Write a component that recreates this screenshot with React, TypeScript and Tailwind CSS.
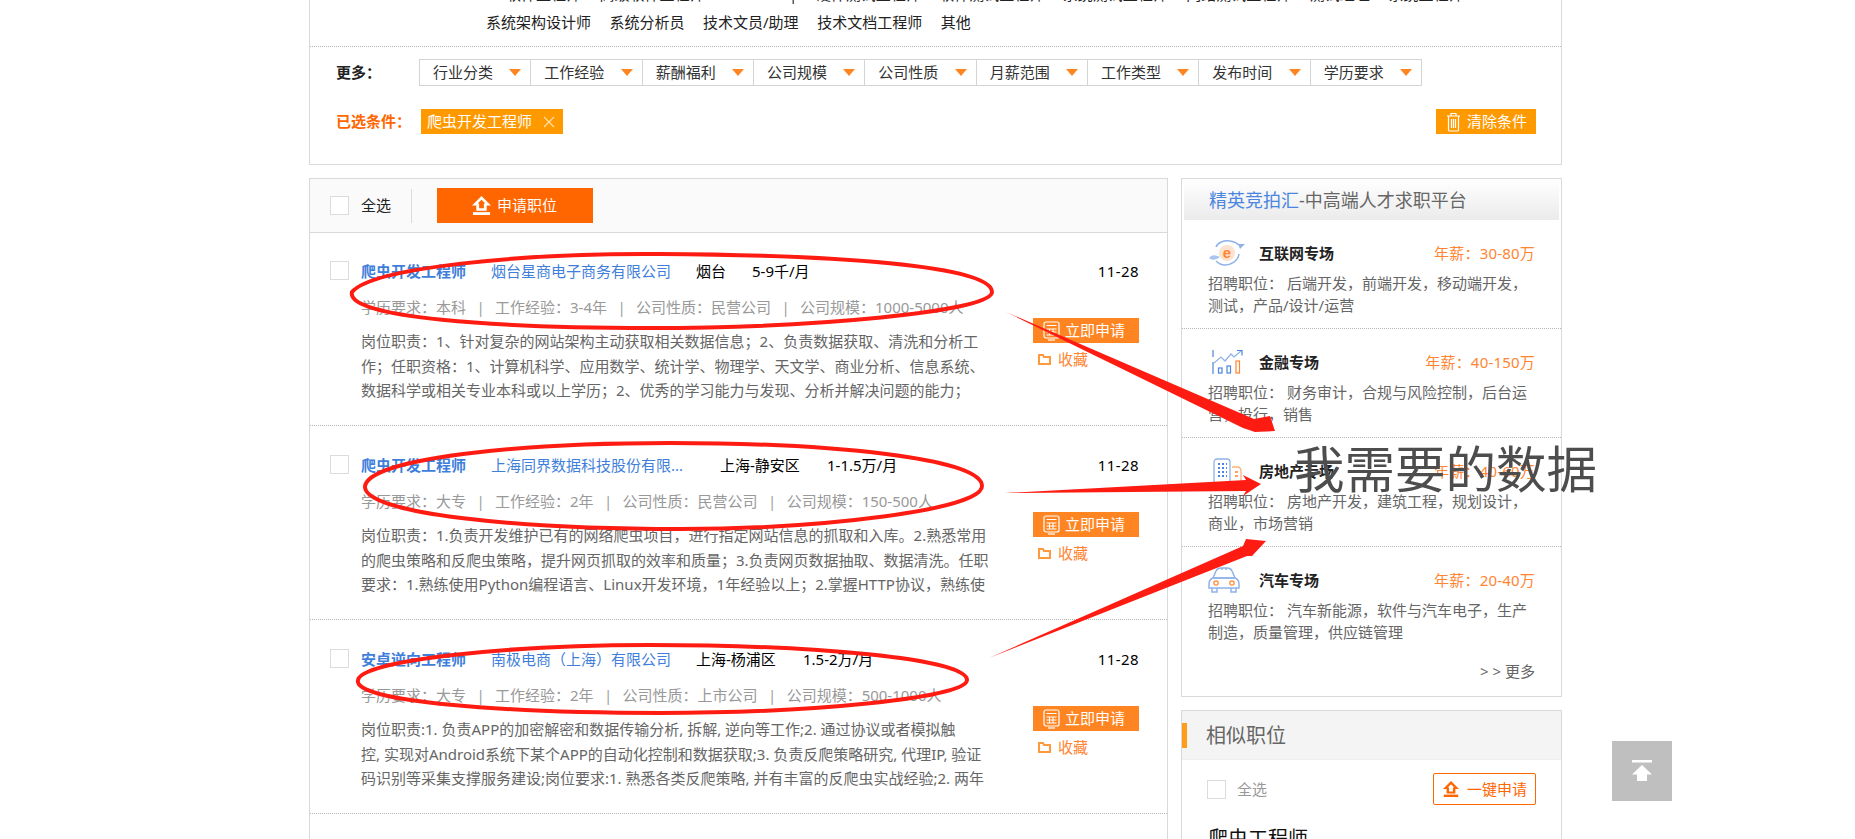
const filters = ['行业分类', '工作经验', '薪酬福利', '公司规模', '公司性质', '月薪范围', '工作类型', '发布时间', '学历要求']

const jobs = [
  {
    title: '爬虫开发工程师',
    company: '烟台星商电子商务有限公司',
    companyWidth: 'w-[205px]',
    city: '烟台',
    cityWidth: 'w-[56px]',
    salary: '5-9千/月',
    meta: ['学历要求：本科', '工作经验：3-4年', '公司性质：民营公司', '公司规模：1000-5000人'],
    desc: [
      '岗位职责：1、针对复杂的网站架构主动获取相关数据信息；2、负责数据获取、清洗和分析工',
      '作；任职资格：1、计算机科学、应用数学、统计学、物理学、天文学、商业分析、信息系统、',
      '数据科学或相关专业本科或以上学历；2、优秀的学习能力与发现、分析并解决问题的能力；',
    ],
  },
  {
    title: '爬虫开发工程师',
    company: '上海同界数据科技股份有限...',
    companyWidth: 'w-[229px]',
    city: '上海-静安区',
    cityWidth: 'w-[107px]',
    salary: '1-1.5万/月',
    meta: ['学历要求：大专', '工作经验：2年', '公司性质：民营公司', '公司规模：150-500人'],
    desc: [
      '岗位职责：1.负责开发维护已有的网络爬虫项目，进行指定网站信息的抓取和入库。2.熟悉常用',
      '的爬虫策略和反爬虫策略，提升网页抓取的效率和质量；3.负责网页数据抽取、数据清洗。任职',
      '要求：1.熟练使用Python编程语言、Linux开发环境，1年经验以上；2.掌握HTTP协议，熟练使',
    ],
  },
  {
    title: '安卓逆向工程师',
    company: '南极电商（上海）有限公司',
    companyWidth: 'w-[205px]',
    city: '上海-杨浦区',
    cityWidth: 'w-[107px]',
    salary: '1.5-2万/月',
    meta: ['学历要求：大专', '工作经验：2年', '公司性质：上市公司', '公司规模：500-1000人'],
    desc: [
      '岗位职责:1. 负责APP的加密解密和数据传输分析, 拆解, 逆向等工作;2. 通过协议或者模拟触',
      '控, 实现对Android系统下某个APP的自动化控制和数据获取;3. 负责反爬策略研究, 代理IP, 验证',
      '码识别等采集支撑服务建设;岗位要求:1. 熟悉各类反爬策略, 并有丰富的反爬虫实战经验;2. 两年',
    ],
  },
]

const zones = [
  { name: '互联网专场', pay: '年薪：30-80万', lines: ['招聘职位： 后端开发，前端开发，移动端开发，', '测试，产品/设计/运营'], icon: <GlobeIcon /> },
  { name: '金融专场', pay: '年薪：40-150万', lines: ['招聘职位： 财务审计，合规与风险控制，后台运', '营，投行，销售'], icon: <ChartIcon /> },
  { name: '房地产专场', pay: '年薪：40-60万', lines: ['招聘职位： 房地产开发，建筑工程，规划设计，', '商业，市场营销'], icon: <BuildingIcon /> },
  { name: '汽车专场', pay: '年薪：20-40万', lines: ['招聘职位： 汽车新能源，软件与汽车电子，生产', '制造，质量管理，供应链管理'], icon: <CarIcon /> },
]

function UploadIcon({ className }: { className: string }) {
  return (
    <svg className={className} viewBox="0 0 20 20" fill="currentColor">
      <path fillRule="evenodd" d="M10 0 L20 10 L15.5 10 L15.5 15.5 L4.5 15.5 L4.5 10 L0 10 Z M10 4 L6 8 L7.5 8 L7.5 13 L12.5 13 L12.5 8 L14 8 Z" />
      <rect x="1" y="17" width="18" height="3" />
    </svg>
  )
}

function CalcIcon() {
  return (
    <svg className="h-[20px] w-[17px] shrink-0" viewBox="0 0 17 20" fill="none" stroke="#fff" strokeWidth="1.2">
      <rect x="1" y="1" width="15" height="16" rx="2" />
      <path d="M3.5 4.5h10M3.5 8h10M3.5 11h10M3.5 14h10M6.5 8v6M10 8v6" strokeWidth="1" />
      <path d="M5 19h7" />
    </svg>
  )
}

function GlobeIcon() {
  return (
    <svg className="h-[26px] w-[38px]" viewBox="0 0 38 26" fill="none">
      <path d="M8 7 C10 2 17 0 22 1 C26 1.5 29 3 31 5" stroke="#8fb2e8" strokeWidth="1.5" />
      <path d="M37 4 L30 4 L32 9 Z" fill="#8fb2e8" />
      <path d="M31 14 C30 21 23 25 17 25 C13 25 10 23 8 21" stroke="#8fb2e8" strokeWidth="1.5" />
      <path d="M1 18 C4 14 7 15 12 17 C8 20 4 21 1 18 Z" fill="#a9c4ee" />
      <circle cx="19" cy="13" r="8" fill="#fbe3cf" />
      <text x="19" y="18" textAnchor="middle" fontSize="15" fontWeight="700" fill="#ff8533" fontFamily="Liberation Sans, sans-serif">e</text>
    </svg>
  )
}

function ChartIcon() {
  return (
    <svg className="ml-[4px] h-[26px] w-[32px]" viewBox="0 0 32 26" fill="none" strokeWidth="1.2">
      <path d="M1 1v7M1 13v12" stroke="#4a86e0" />
      <path d="M2 14 L9 8 L13 12 L19 5 L22 8 L29 2" stroke="#8fb2e8" />
      <path d="M25 1.5h5v5" stroke="#4a86e0" />
      <rect x="6.5" y="19" width="3.5" height="5" stroke="#4a86e0" />
      <rect x="15" y="17" width="3.5" height="7" stroke="#4a86e0" />
      <rect x="24" y="12" width="3.5" height="12" stroke="#ff8533" />
    </svg>
  )
}

function BuildingIcon() {
  return (
    <svg className="ml-[5px] h-[26px] w-[30px]" viewBox="0 0 30 26" fill="none">
      <rect x="1" y="1" width="16" height="26" rx="3" stroke="#8fb2e8" strokeWidth="1.3" />
      <path d="M5 6h2M9 6h2M13 6h1M5 10h2M9 10h2M13 10h1M5 14h2M9 14h2M13 14h1M5 18h2M9 18h2M13 18h1" stroke="#4a86e0" strokeWidth="2" />
      <path d="M19 9h5c2 0 4 1 4 4v13H19" stroke="#ffb27a" strokeWidth="1.3" />
      <path d="M22 14h3M22 18h3" stroke="#ff8533" strokeWidth="1.3" />
    </svg>
  )
}

function CarIcon() {
  return (
    <svg className="h-[26px] w-[32px]" viewBox="0 0 32 26" fill="none" stroke="#8fb2e8" strokeWidth="1.5">
      <path d="M5 11 L8 4 C9 1.5 11 1 13 1 H19 C21 1 23 1.5 24 4 L27 11" />
      <path d="M5 11 C2.5 12 1 14 1 17 V21 H31 V17 C31 14 29.5 12 27 11 Z" />
      <path d="M4 21v4h5v-4M23 21v4h5v-4M14 1v2M18 1v2M5 11h22" />
      <circle cx="8" cy="16" r="2.2" stroke="#ff8533" strokeWidth="1.2" />
      <circle cx="24" cy="16" r="2.2" stroke="#ff8533" strokeWidth="1.2" />
    </svg>
  )
}

function Checkbox({ className }: { className: string }) {
  return <span className={`block h-[19px] w-[19px] shrink-0 border border-[#dcdcdc] bg-white ${className}`} />
}

function Job({ job }: { job: (typeof jobs)[number] }) {
  return (
    <div className="h-[194px] border-b border-dotted border-[#b5b5b5] pl-[20px] pr-[28px] pt-[27px] first:h-[193px] first:pt-[26px]">
      <div className="flex h-[24px] items-start text-[15px] leading-[24px]">
        <Checkbox className="mt-[2px] mr-[12px]" />
        <span className="w-[130px] font-bold text-[#3f7fdb]">{job.title}</span>
        <span className={`${job.companyWidth} text-[#3f7fdb]`}>{job.company}</span>
        <span className={`${job.cityWidth} text-black`}>{job.city}</span>
        <span className="text-black">{job.salary}</span>
        <span className="ml-auto tracking-[0.4px] text-black">11-28</span>
      </div>
      <div className="mt-[12px] flex pl-[31px]">
        <div className="w-[672px] text-[15px]">
          <div className="h-[24px] whitespace-nowrap leading-[24px] text-[#999]">
            {job.meta.map((m, i) => (
              <span key={m}>
                {i > 0 && <span className="inline-block w-[29px] text-center text-[#a0a0a0]">|</span>}
                {m}
              </span>
            ))}
          </div>
          <div className="mt-[10px] text-[#666] leading-[24.5px]">
            {job.desc.map((line) => (
              <div key={line} className="whitespace-nowrap">{line}</div>
            ))}
          </div>
        </div>
        <div className="mt-[23px] w-[106px]">
          <button className="flex h-[25px] w-[106px] items-center bg-[#ff8522] pl-[10px] text-[15px] text-white">
            <CalcIcon />
            <span className="ml-[5px]">立即申请</span>
          </button>
          <div className="mt-[4px] flex h-[24px] items-center pl-[5px] text-[15px] text-[#ff8533]">
            <svg className="h-[12px] w-[13px]" viewBox="0 0 13 12" fill="none" stroke="#ff9a3c" strokeWidth="2">
              <path d="M1 2h4l1 2h6v7H1z" />
            </svg>
            <span className="ml-[7px]">收藏</span>
          </div>
        </div>
      </div>
    </div>
  )
}

function Annotations() {
  const red = '#fe1c12'
  return (
    <svg className="pointer-events-none absolute left-0 top-0 h-[839px] w-[1855px]" viewBox="0 0 1855 839" fill="none">
      <path d="M352 292 C372 268 520 253 660 254 C830 255 992 265 992 292 C992 312 810 328 650 328 C500 328 345 318 352 292 Z" stroke={red} strokeWidth="4" />
      <path d="M365 486 C370 458 520 443 670 443 C830 443 982 458 982 486 C982 510 820 529 680 529 C520 529 362 514 365 486 Z" stroke={red} strokeWidth="4" />
      <path d="M358 680 C362 660 510 645 650 645 C810 645 967 658 967 680 C967 698 810 713 660 713 C510 713 352 702 358 680 Z" stroke={red} strokeWidth="4" />
      <polygon points="1006,312 1254,419 1270,416 1275,431 1255,432 1243,428" fill={red} />
      <polygon points="1005,493 1246,480 1243,475 1261,484 1243,496 1246,491" fill={red} />
      <polygon points="989,658 1243,546 1246,539 1266,541 1252,556 1247,556" fill={red} />
    </svg>
  )
}

export default function App() {
  return (
    <div className="relative h-[839px] w-[1855px] overflow-hidden bg-white pl-[309px] [font-family:'Noto_Sans','Noto_Sans_CJK_SC',sans-serif]">
      <div className="w-[1253px]">
        {/* filter panel */}
        <div className="h-[165px] border-x border-b border-[#d9d9d9]">
          <div className="flow-root h-[47px] border-b border-dotted border-[#b5b5b5] text-[15px] leading-[24px] text-[#222]">
            <div className="ml-[196px] -mt-[18px] flex h-[24px] gap-[18.5px] whitespace-nowrap">
              <span>软件工程师</span><span>高级软件工程师</span><span className="ml-[66px]">|</span><span>硬件测试工程师</span><span>软件测试工程师</span><span>系统测试工程师</span><span>网络测试工程师</span><span>测试经理</span><span>系统工程师</span>
            </div>
            <div className="ml-[176px] mt-[4px] flex h-[24px] gap-[18.5px] whitespace-nowrap">
              <span>系统架构设计师</span><span>系统分析员</span><span>技术文员/助理</span><span>技术文档工程师</span><span>其他</span>
            </div>
          </div>
          <div className="mt-[12px] flex pl-[26px] text-[15px]">
            <span className="w-[83px] font-bold leading-[27px] text-[#222]">更多：</span>
            <div className="flex h-[27px] w-[1003px] border border-[#d4d4d4]">
              {filters.map((f) => (
                <div key={f} className="flex flex-1 items-center justify-between border-r border-[#d4d4d4] pl-[13px] pr-[9px] leading-[25px] text-[#333] last:border-r-0">
                  {f}
                  <span className="h-0 w-0 border-x-[6px] border-t-[7px] border-x-transparent border-t-[#ff8522]" />
                </div>
              ))}
            </div>
          </div>
          <div className="mt-[23px] flex items-center pl-[26px] pr-[25px] text-[15px]">
            <span className="w-[85px] font-bold text-[#ff6600]">已选条件：</span>
            <div className="flex h-[25px] w-[142px] items-center justify-between bg-[#ff9900] pl-[6px] pr-[8px] text-white">
              爬虫开发工程师
              <svg className="h-[12px] w-[12px]" viewBox="0 0 12 12" stroke="#ffe2b0" strokeWidth="1.1"><path d="M1 1l10 10M11 1L1 11" /></svg>
            </div>
            <button className="ml-auto flex h-[25px] w-[100px] items-center bg-[#ff9900] pl-[10px] text-white">
              <svg className="h-[20px] w-[15px] shrink-0" viewBox="0 0 15 20" fill="none" stroke="#fff" strokeWidth="1.2">
                <path d="M1 4h13M5 4V1.5h5V4M2.5 4v14c0 .6.5 1 1 1h8c.5 0 1-.4 1-1V4M5.5 7v9M7.5 7v9M9.5 7v9" />
              </svg>
              <span className="ml-[6px]">清除条件</span>
            </button>
          </div>
        </div>

        <div className="mt-[13px] flex gap-[13px]">
          {/* job list */}
          <div className="w-[859px] border-x border-t border-[#d9d9d9]">
            <div className="flex h-[54px] items-center border-b border-[#d9d9d9] bg-[#fafafa] pl-[20px] text-[15px]">
              <Checkbox className="" />
              <span className="ml-[12px] text-[#222]">全选</span>
              <span className="ml-[20px] h-[34px] w-px bg-[#dcdcdc]" />
              <button className="ml-[25px] flex h-[35px] w-[156px] items-center bg-[#ff6600] pl-[35px] text-white">
                <UploadIcon className="h-[19px] w-[19px] shrink-0 text-white" />
                <span className="ml-[6px]">申请职位</span>
              </button>
            </div>
            <div>
              {jobs.map((job) => (
                <Job key={job.company} job={job} />
              ))}
            </div>
          </div>

          {/* sidebar */}
          <div className="w-[381px]">
            <div className="h-[519px] border border-[#d9d9d9]">
              <div className="mx-[2px] h-[41px] bg-gradient-to-b from-white to-[#ebebeb] pl-[25px] text-[18px] leading-[42px] text-[#666]">
                <span className="text-[#4a86e0]">精英竞拍汇</span>-中高端人才求职平台
              </div>
              {zones.map((z, i) => (
                <div key={z.name} className={i < 3 ? 'h-[109px] border-b border-dotted border-[#b5b5b5] px-[26px] pt-[20px]' : 'h-[96px] px-[26px] pt-[20px]'}>
                  <div className="flex h-[26px] items-center text-[15px]">
                    <span className="w-[51px] shrink-0">{z.icon}</span>
                    <span className="font-bold text-[#222]">{z.name}</span>
                    <span className="ml-auto text-[15px] tracking-[0.2px] text-[#ff8533]">{z.pay}</span>
                  </div>
                  <div className="mt-[6px] text-[15px] leading-[22px] text-[#666]">
                    {z.lines.map((l) => (
                      <div key={l} className="whitespace-pre">{l}</div>
                    ))}
                  </div>
                </div>
              ))}
              <div className="mt-[17px] pr-[26px] text-right text-[15px] leading-[22px] text-[#666]">&gt; &gt; 更多</div>
            </div>

            <div className="mt-[13px] border border-[#d9d9d9]">
              <div className="relative h-[49px] border-b border-[#eeeeee] bg-[#f4f4f4] pl-[24px] text-[20px] leading-[50px] text-[#666]">
                <span className="absolute left-0 top-[12px] h-[25px] w-[5px] bg-[#ff9c1a]" />
                相似职位
              </div>
              <div className="flex items-center pl-[25px] pr-[25px] pt-[13px] text-[15px]">
                <Checkbox className="" />
                <span className="ml-[11px] text-[#999]">全选</span>
                <button className="ml-auto flex h-[32px] w-[103px] items-center rounded-[2px] border border-[#ff6600] pl-[9px] text-[#ff6600]">
                  <UploadIcon className="h-[20px] w-[16px] shrink-0 text-[#ff6600]" />
                  <span className="ml-[8px]">一键申请</span>
                </button>
              </div>
              <div className="mt-[22px] pl-[26px] text-[20px] leading-[24px] text-[#111]">爬虫工程师</div>
            </div>
          </div>
        </div>
      </div>

      <Annotations />

      {/* back to top */}
      <div className="absolute left-[1612px] top-[741px] flex h-[60px] w-[60px] flex-col items-center bg-[#bfbfbf] pt-[19px]">
        <svg className="h-[22px] w-[20px]" viewBox="0 0 20 22" fill="#fff">
          <rect y="0" width="20" height="2.5" />
          <path d="M10 5 L20 14.5 L15 14.5 L15 21 L5 21 L5 14.5 L0 14.5 Z" />
        </svg>
      </div>

      <div className="absolute left-[1294px] top-[433px] text-[50.5px] leading-[72px] whitespace-nowrap text-[#4d4d4d]">我需要的数据</div>
    </div>
  )
}
